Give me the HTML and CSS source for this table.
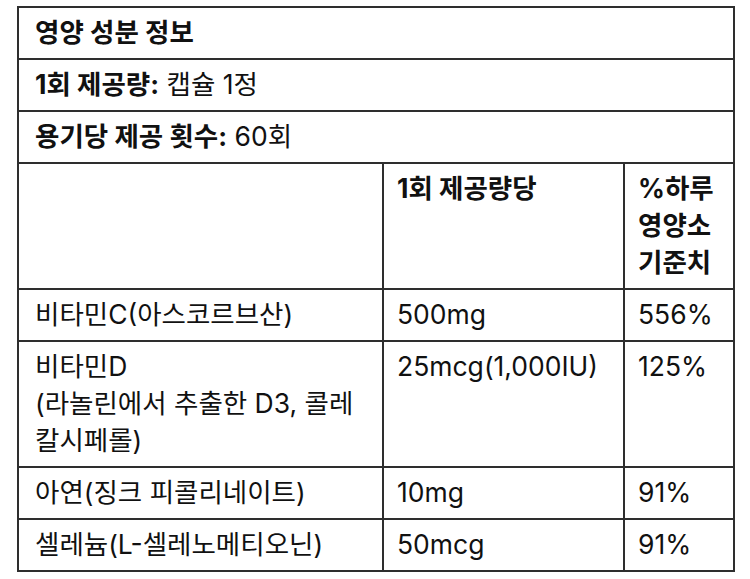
FILE: index.html
```html
<!DOCTYPE html>
<html lang="ko">
<head>
<meta charset="utf-8">
<link rel="stylesheet" href="styles.css">
</head>
<body>
<table class="facts">
  <colgroup>
    <col class="c-name">
    <col class="c-amount">
    <col class="c-dv">
  </colgroup>
  <tbody>
    <tr><td colspan="3" class="bold">영양 성분 정보</td></tr>
    <tr><td colspan="3"><b>1회 제공량:</b> 캡슐 1정</td></tr>
    <tr><td colspan="3"><b>용기당 제공 횟수:</b> 60회</td></tr>
    <tr class="head">
      <th></th>
      <th>1회 제공량당</th>
      <th>%하루 영양소 기준치</th>
    </tr>
    <tr><td>비타민C(아스코르브산)</td><td>500mg</td><td>556%</td></tr>
    <tr><td>비타민D<br>(라놀린에서 추출한 D3, 콜레칼시페롤)</td><td>25mcg(1,000IU)</td><td>125%</td></tr>
    <tr><td>아연(징크 피콜리네이트)</td><td>10mg</td><td>91%</td></tr>
    <tr><td>셀레늄(L-셀레노메티오닌)</td><td>50mcg</td><td>91%</td></tr>
  </tbody>
</table>
</body>
</html>
```

FILE: styles.css
```css
html, body {
  margin: 0;
  padding: 0;
  background: #ffffff;
}

body {
  padding: 6px 0 0 17px;
  font-family: "Inter", "Noto Sans CJK KR", sans-serif;
  font-size: 26.5px;
  line-height: 37px;
  color: #111111;
}

.facts {
  border-collapse: collapse;
  table-layout: fixed;
  width: 716px;
  border: 2px solid #2e2e2e;
}

.c-name { width: 365px; }
.c-amount { width: 241px; }
.c-dv { width: 110px; }

.facts td,
.facts th {
  border: 2px solid #2e2e2e;
  padding: 6px 14px 7px 16px;
  text-align: left;
  vertical-align: top;
  font-weight: 400;
}

.facts td:nth-child(2),
.facts td:nth-child(3),
.facts th:nth-child(2),
.facts th:nth-child(3) {
  padding-left: 13px;
  padding-right: 8px;
}

.facts .bold,
.facts b,
.facts .head th {
  font-weight: 700;
}
```
